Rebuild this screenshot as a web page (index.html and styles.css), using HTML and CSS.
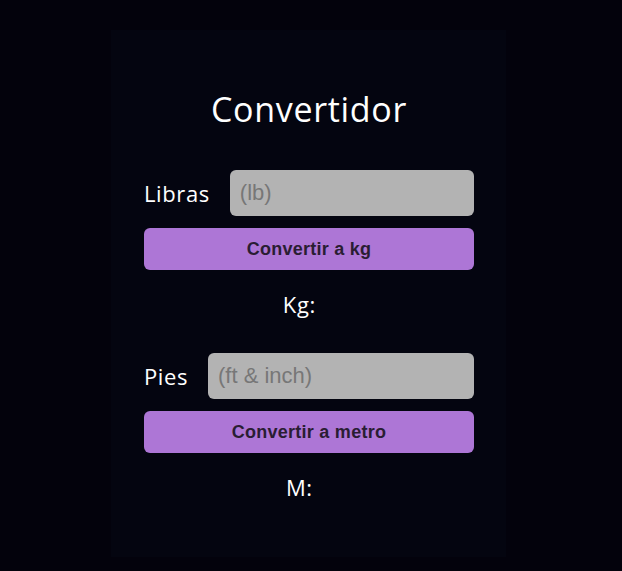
FILE: index.html
```html
<!DOCTYPE html>
<html lang="es">
<head>
<meta charset="utf-8">
<title>Convertidor</title>
<link rel="stylesheet" href="styles.css">
</head>
<body>
<main class="card">
  <h1 class="title">Convertidor</h1>
  <section class="block">
    <div class="row">
      <label class="label" for="lb">Libras</label>
      <input class="field" id="lb" type="text" placeholder="(lb)">
    </div>
    <button class="btn">Convertir a kg</button>
    <p class="result">Kg: <span class="value"></span></p>
  </section>
  <section class="block">
    <div class="row">
      <label class="label" for="ft">Pies</label>
      <input class="field" id="ft" type="text" placeholder="(ft &amp; inch)">
    </div>
    <button class="btn">Convertir a metro</button>
    <p class="result">M: <span class="value"></span></p>
  </section>
</main>
</body>
</html>
```
FILE: styles.css
```css
html, body {
  margin: 0;
  background: #03020c;
}
body {
  display: flex;
  justify-content: center;
  padding: 30px 5px 14px 0;
  font-family: "Open Sans", "DejaVu Sans", sans-serif;
  color: #ffffff;
}
.card {
  width: 395px;
  height: 527px;
  box-sizing: border-box;
  background: #040510;
  padding: 57px 32px 0 33px;
}
.title {
  margin: 0 0 39px;
  text-align: center;
  font-weight: 500;
  font-size: 34px;
  line-height: 44px;
  letter-spacing: 0.7px;
}
.block {
  display: flex;
  flex-direction: column;
}
.block + .block {
  margin-top: 35px;
}
.row {
  display: flex;
  align-items: center;
  gap: 20px;
}
.label {
  font-size: 22px;
  letter-spacing: 0.6px;
}
.field {
  flex: 1;
  min-width: 0;
  height: 46px;
  box-sizing: border-box;
  border: none;
  border-radius: 6px;
  background: #b3b3b3;
  padding: 0 10px;
  font-family: "Liberation Sans", Arial, sans-serif;
  font-size: 22px;
  color: #222;
  outline: none;
}
.field::placeholder {
  color: #777777;
}
.btn {
  margin-top: 12px;
  height: 42px;
  border: none;
  border-radius: 6px;
  background: #ad76d6;
  color: #2a1d33;
  font-family: "Liberation Sans", Arial, sans-serif;
  font-weight: bold;
  font-size: 18px;
  letter-spacing: 0.25px;
  cursor: pointer;
}
.result {
  margin: 20px 0 0;
  padding-right: 13px;
  text-align: center;
  font-size: 22px;
  line-height: 28px;
  letter-spacing: 0.6px;
}
.value {
  display: inline-block;
  min-width: 0;
}
```
